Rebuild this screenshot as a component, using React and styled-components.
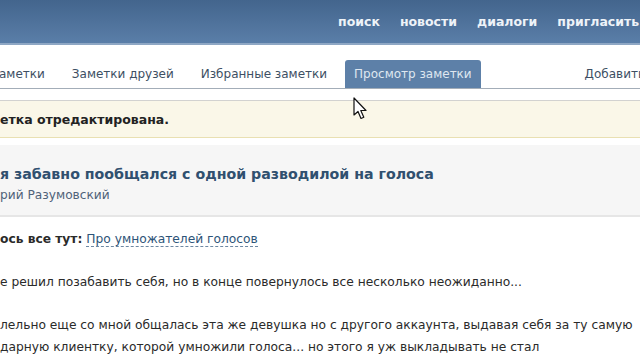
import React from "react";
import styled, { createGlobalStyle } from "styled-components";

const Global = createGlobalStyle`
  html, body { margin: 0; padding: 0; background: #fff; }
  body { width: 640px; height: 360px; overflow: hidden; font-family: "DejaVu Sans", Tahoma, sans-serif; }
`;

const Page = styled.div`
  position: relative;
  width: 640px;
  height: 360px;
  overflow: hidden;
  background: #fff;
`;

const Header = styled.header`
  height: 43px;
  background: linear-gradient(#43658d, #5a7ea8);
  border-bottom: 2px solid #8ea7c4;
  display: flex;
  align-items: center;
  padding-left: 338px;
  gap: 20px;
  white-space: nowrap;
`;

const NavLink = styled.span`
  color: #eef3f8;
  font-weight: bold;
  font-size: 12.5px;
`;

const Tabs = styled.nav`
  height: 43px;
  display: flex;
  align-items: flex-end;
  border-bottom: 1px solid #a3adb8;
  margin-left: -10px;
  margin-right: -14px;
  gap: 9px;
  white-space: nowrap;
`;

const Tab = styled.div`
  height: 28px;
  padding: 0 9px;
  display: flex;
  align-items: center;
  font-size: 12px;
  color: ${p => (p.$active ? "#dfe7f0" : "#3d4f63")};
  background: ${p => (p.$active ? "#5d80a8" : "transparent")};
  border-radius: 3px 3px 0 0;
  margin-left: ${p => (p.$push ? "auto" : "0")};
`;

const Notice = styled.div`
  margin-top: 11px;
  height: 35px;
  background: #faf7e8;
  border-top: 1px solid #d2d2d0;
  border-bottom: 1px solid #e9e0b2;
  display: flex;
  align-items: center;
  padding-top: 1px;
  font-size: 12.5px;
  font-weight: bold;
  color: #222;
`;

const TitleBlock = styled.div`
  margin-top: 7px;
  background: #f6f6f6;
  border-bottom: 2px solid #e6e6e6;
  padding: 19px 0 11px;
`;

const Title = styled.h1`
  margin: 0;
  font-size: 14.2px;
  font-weight: bold;
  color: #30506f;
  line-height: 20px;
`;

const Author = styled.div`
  margin-top: 2px;
  font-size: 12.2px;
  color: #4f6279;
  line-height: 18px;
`;

const Body = styled.div`
  padding-top: 12px;
  font-size: 12.25px;
  color: #2a2a2a;
  line-height: 21.5px;
  white-space: nowrap;
`;

const Para = styled.p`
  margin: 0 0 21.5px;
`;

const Strong = styled.b``;

const Link = styled.span`
  color: #2d5478;
  border-bottom: 1px dashed #6d88a3;
`;

const Cursor = styled.svg`
  position: absolute;
  left: 353px;
  top: 97px;
`;

export default function App() {
  return (
    <Page>
      <Global />
      <Header>
        <NavLink>поиск</NavLink>
        <NavLink>новости</NavLink>
        <NavLink>диалоги</NavLink>
        <NavLink>пригласить</NavLink>
      </Header>
      <Tabs>
        <Tab>аметки</Tab>
        <Tab>Заметки друзей</Tab>
        <Tab>Избранные заметки</Tab>
        <Tab $active>Просмотр заметки</Tab>
        <Tab $push>Добавить</Tab>
      </Tabs>
      <Notice>етка отредактирована.</Notice>
      <TitleBlock>
        <Title>я забавно пообщался с одной разводилой на голоса</Title>
        <Author>рий Разумовский</Author>
      </TitleBlock>
      <Body>
        <Para>
          <Strong>ось все тут:</Strong> <Link>Про умножателей голосов</Link>
        </Para>
        <Para>е решил позабавить себя, но в конце повернулось все несколько неожиданно...</Para>
        <Para>
          лельно еще со мной общалась эта же девушка но с другого аккаунта, выдавая себя за ту самую
          <br />
          дарную клиентку, которой умножили голоса... но этого я уж выкладывать не стал
        </Para>
      </Body>
      <Cursor width="16" height="24" viewBox="0 0 16 24">
        <path d="M1 1 L1 18 L5 14.5 L8 21.5 L10.8 20.3 L7.8 13.5 L13 13.5 Z" fill="#fff" stroke="#111" strokeWidth="1.2" strokeLinejoin="round" />
      </Cursor>
    </Page>
  );
}
